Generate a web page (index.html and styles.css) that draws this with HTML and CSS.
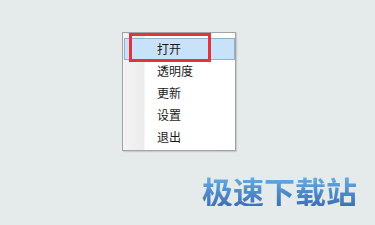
FILE: index.html
```html
<!DOCTYPE html>
<html lang="zh-CN">
<head>
<meta charset="utf-8">
<title>菜单</title>
<link rel="stylesheet" href="styles.css">
</head>
<body>
<div class="screen">
  <div class="menu">
    <div class="item active">打开</div>
    <div class="item">透明度</div>
    <div class="item">更新</div>
    <div class="item">设置</div>
    <div class="item">退出</div>
    <div class="mark"></div>
  </div>
  <div class="watermark">极速下载站</div>
</div>
</body>
</html>
```
FILE: styles.css
```css
html, body {
  margin: 0;
  padding: 0;
}
body {
  width: 375px;
  height: 225px;
  overflow: hidden;
  background: #e5eaea;
  font-family: "Noto Sans CJK SC", "Noto Sans", sans-serif;
}
.screen {
  padding: 32px 0 0 122px;
}
.menu {
  position: relative;
  width: 111px;
  padding: 5px 0 2px 1px;
  border: 1px solid #a3a3a3;
  background: linear-gradient(to right, #f4f4f4 0px, #ececec 21px, #ffffff 22px, #ffffff 100%);
  box-shadow: 1px 1px 1px rgba(0,0,0,0.12);
}
.item {
  height: 22px;
  line-height: 21px;
  padding-left: 33px;
  font-size: 12px;
  color: #1a1a1a;
  box-sizing: border-box;
}
.item.active {
  background: #c8e2fa;
  border: 1px solid #8fb0cf;
  padding-left: 32px;
  line-height: 19px;
}
.mark {
  position: absolute;
  left: 6px;
  top: 0px;
  width: 76px;
  height: 23px;
  border: 3px solid #e0363b;
}
.watermark {
  margin: 24px 0 0 80px;
  font-size: 31px;
  line-height: 1;
  font-weight: 700;
  background: linear-gradient(to bottom, #6cb0e4 0%, #4f8bcb 55%, #3f70b5 100%);
  -webkit-background-clip: text;
  background-clip: text;
  color: transparent;
  width: max-content;
}
```
